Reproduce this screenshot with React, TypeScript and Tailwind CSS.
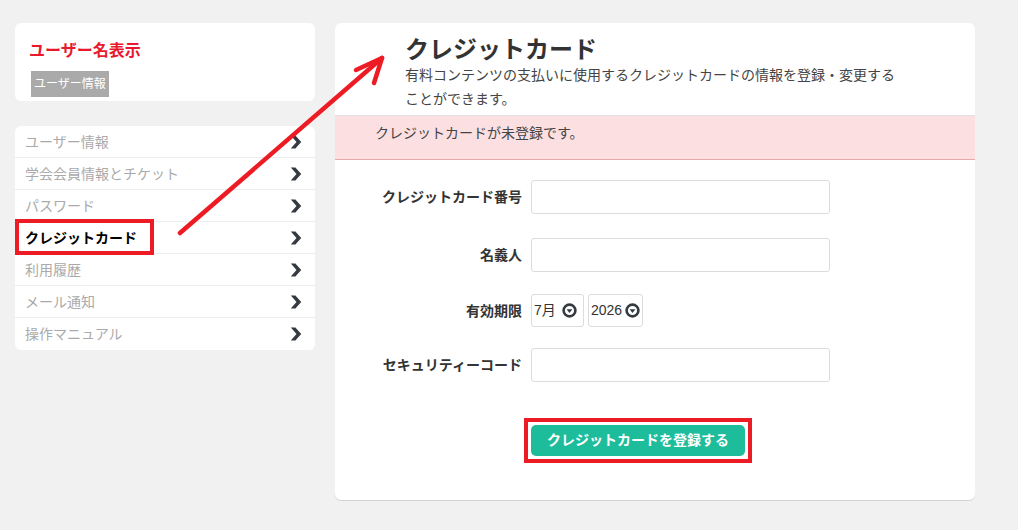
import React from "react";

const menuItems = [
  "ユーザー情報",
  "学会会員情報とチケット",
  "パスワード",
  "クレジットカード",
  "利用履歴",
  "メール通知",
  "操作マニュアル",
];

function Chevron() {
  return (
    <svg width="12" height="14" viewBox="0 0 12 14" className="shrink-0">
      <path d="M0.8 0.5 L5.4 0.5 L11.2 7 L5.4 13.5 L0.8 13.5 L6.5 7 Z" fill="#343a40" />
    </svg>
  );
}

function CircleDown() {
  return (
    <svg width="15" height="15" viewBox="0 0 15 15" className="shrink-0">
      <circle cx="7.5" cy="7.5" r="5.9" fill="none" stroke="#343a40" strokeWidth="2.6" />
      <path d="M4.6 6.2 L10.4 6.2 L7.5 9.9 Z" fill="#343a40" />
    </svg>
  );
}

function TextField() {
  return <div className="h-[34px] w-[299px] rounded-[3px] border border-[#dcdcdc] bg-white" />;
}

function FormRow({ label, children, className }: { label: string; children: React.ReactNode; className?: string }) {
  return (
    <div className={"flex items-center " + (className ?? "")}>
      <div className="w-[196px] pr-[9px] text-right text-[14px] font-bold leading-[20px] text-[#333]">{label}</div>
      {children}
    </div>
  );
}

export default function App() {
  return (
    <div
      className="relative flex min-h-[530px] items-start gap-5 bg-[#f1f1f1] pl-[15px] pt-[23px]"
      style={{ fontFamily: '"Liberation Sans", "Noto Sans CJK JP", sans-serif' }}
    >
      {/* sidebar */}
      <aside className="flex w-[300px] flex-col gap-[25px]">
        <div className="h-[78px] rounded-md bg-white pl-[14px] pt-[16px]">
          <div className="text-[16px] font-bold leading-[24px] text-[#e8192c]">ユーザー名表示</div>
          <div className="ml-[2px] mt-[8px] inline-block h-[26px] bg-[#aaaaaa] px-[3px] text-[12px] leading-[26px] text-white">
            ユーザー情報
          </div>
        </div>

        <nav className="rounded-md bg-white">
          {menuItems.map((item, i) => {
            const active = item === "クレジットカード";
            return (
              <div
                key={item}
                className={
                  "relative flex h-[32px] items-center justify-between pl-[10px] pr-[13px] " +
                  (i < menuItems.length - 1 ? "border-b border-[#ececec]" : "")
                }
              >
                <span
                  className={
                    "text-[14px] leading-[20px] " + (active ? "font-bold text-black" : "text-[#aaaaaa]")
                  }
                >
                  {item}
                </span>
                <Chevron />
                {active && (
                  <div className="pointer-events-none absolute left-0 top-[-3px] h-[36px] w-[139px] border-4 border-[#ed1c24]" />
                )}
              </div>
            );
          })}
        </nav>
      </aside>

      {/* main panel */}
      <main className="h-[477px] w-[640px] overflow-hidden rounded-md bg-white shadow-[0_1px_0_#d4d4d4]">
        <header className="pb-[4px] pl-[70px] pt-[13px]">
          <h1 className="text-[24px] font-bold leading-[27px] text-[#333]">クレジットカード</h1>
          <p className="w-[500px] text-[14px] leading-[24px] text-[#444]">
            有料コンテンツの支払いに使用するクレジットカードの情報を登録・変更することができます。
          </p>
        </header>

        <div className="h-[45px] border-b border-t border-b-[#e9a9a9] border-t-[#e2e2e2] bg-[#fcdfe0] pl-[40px] pt-[5px] text-[14px] leading-[24px] text-[#444]">
          クレジットカードが未登録です。
        </div>

        <form className="flex flex-col">
          <FormRow label="クレジットカード番号" className="mt-[20px]">
            <TextField />
          </FormRow>
          <FormRow label="名義人" className="mt-[24px]">
            <TextField />
          </FormRow>
          <FormRow label="有効期限" className="mt-[22px]">
            <div className="flex gap-[4px]">
              <div className="flex h-[33px] w-[53px] items-center justify-between rounded-[3px] border border-[#dcdcdc] pl-[2px] pr-[6px] text-[14px] text-[#333]">
                <span>7月</span>
                <CircleDown />
              </div>
              <div className="flex h-[33px] w-[55px] items-center justify-between rounded-[3px] border border-[#dcdcdc] pl-[2px] pr-[2px] text-[14px] text-[#333]">
                <span>2026</span>
                <CircleDown />
              </div>
            </div>
          </FormRow>
          <FormRow label="セキュリティーコード" className="mt-[21px]">
            <TextField />
          </FormRow>

          <div className="ml-[189px] mt-[36px] self-start border-4 border-[#ed1c24] p-[3px]">
            <button
              type="button"
              className="h-[31px] w-[214px] rounded-[5px] bg-[#1dbc9a] text-[14px] font-bold text-white"
            >
              クレジットカードを登録する
            </button>
          </div>
        </form>
      </main>

      {/* annotation arrow */}
      <svg className="pointer-events-none absolute left-0 top-0" width="1018" height="530">
        <g stroke="#ed1c24" strokeWidth="4.5" strokeLinecap="round" strokeLinejoin="round" fill="none">
          <path d="M180 233 L382 58" />
          <path d="M356 70 L382 58 L374 83" />
        </g>
      </svg>
    </div>
  );
}
